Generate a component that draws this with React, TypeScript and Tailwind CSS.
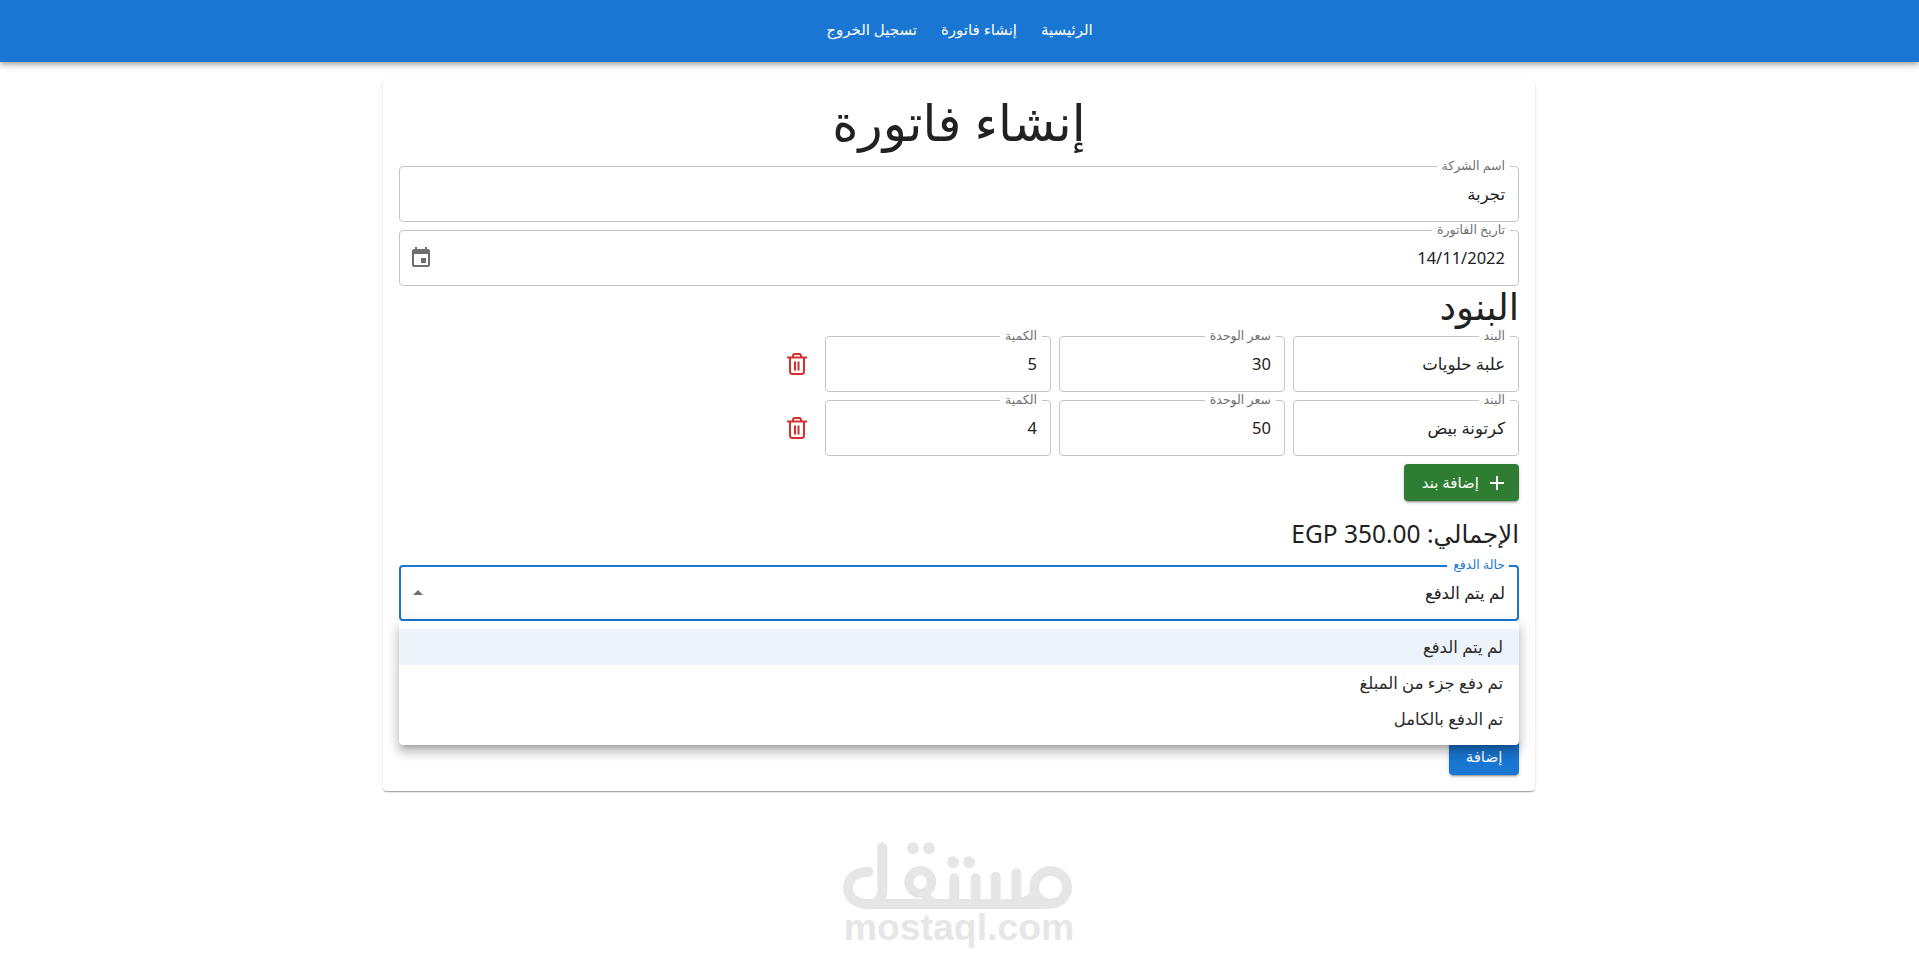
import React from "react";

const fieldFont = "font-['Noto_Sans','DejaVu_Sans',sans-serif]";

function Field({
  label,
  value,
  className,
  focused,
  end,
}: {
  label: string;
  value: string;
  className?: string;
  focused?: boolean;
  end?: React.ReactNode;
}) {
  return (
    <div className={`relative h-[56px] ${className ?? ""}`}>
      <fieldset
        className={`absolute inset-0 -top-[5px] rounded-[4px] px-2 ${
          focused ? "border-2 border-[#1976d2]" : "border border-[#c4c4c4]"
        }`}
      >
        <legend className="h-[11px] px-[5px] text-[12.500px] leading-[11px] invisible">{label}</legend>
      </fieldset>
      <label
        className={`absolute top-[-8px] right-[14px] text-[12.500px] leading-[16px] ${
          focused ? "text-[#1976d2]" : "text-[#6f6f6f]"
        }`}
      >
        {label}
      </label>
      <div className="relative flex h-full items-center justify-between px-[14px] text-[16.500px] text-[#212121]">
        <span>{value}</span>
        {end}
      </div>
    </div>
  );
}

function TrashIcon() {
  return (
    <svg width="24" height="24" viewBox="0 0 24 24" fill="none" stroke="#d32f2f" strokeWidth="2">
      <path d="M2 5.500h20" />
      <path d="M5 5.500v14a2.500 2.500 0 0 0 2.500 2.500h9a2.500 2.500 0 0 0 2.500-2.500v-14" />
      <path d="M8 5.500V4a2 2 0 0 1 2-2h4a2 2 0 0 1 2 2v1.500" />
      <path d="M10 9.500v9M13.500 9.500v9" />
    </svg>
  );
}

function ItemRow({ name, price, qty }: { name: string; price: string; qty: string }) {
  return (
    <div className="flex items-center gap-2">
      <Field label="البند" value={name} className="w-[226px]" />
      <Field label="سعر الوحدة" value={price} className="w-[226px]" />
      <Field label="الكمية" value={qty} className="w-[226px]" />
      <div className="mr-[2px] flex w-[36px] justify-center">
        <TrashIcon />
      </div>
    </div>
  );
}

function MostaqlLogo() {
  return (
    <svg width="240" height="70" viewBox="180 90 720 210" fill="none" stroke="#e6e6e6" strokeWidth="30" strokeLinecap="round">
      {/* meem */}
      <circle cx="815" cy="232" r="49" />
      {/* baseline */}
      <path d="M270 282H800" />
      {/* lam */}
      <path d="M268 185C225 185 207 210 207 234C207 262 232 283 270 283C300 283 310 262 310 240V112" />
      {/* qaf */}
      <circle cx="424" cy="216" r="34" strokeWidth="28" />
      <path d="M470 282C450 275 440 262 440 250" />
      {/* teeth */}
      <path d="M526 278V205M590 278V205M650 278V200M712 278V190" />
      <path d="M712 278C735 278 752 270 760 262" />
      {/* dots */}
      <g fill="#e6e6e6" stroke="none">
        <circle cx="402" cy="115" r="18" />
        <circle cx="450" cy="115" r="18" />
        <circle cx="522" cy="157" r="18" />
        <circle cx="570" cy="157" r="18" />
      </g>
    </svg>
  );
}

export default function App() {
  return (
    <div dir="rtl" className={`min-h-[967px] bg-white ${fieldFont}`}>
      <header className="flex h-[62px] items-center justify-center gap-6 bg-[#1976d2] pb-1 text-[15px] font-medium text-white shadow-[0_2px_4px_-1px_rgba(0,0,0,0.2),0_4px_5px_0_rgba(0,0,0,0.14),0_1px_10px_0_rgba(0,0,0,0.12)]">
        <span>الرئيسية</span>
        <span>إنشاء فاتورة</span>
        <span>تسجيل الخروج</span>
      </header>

      <div className="pr-px">
        <main className="relative mx-auto mt-[18px] h-[711px] w-[1152px] rounded-[4px] bg-white p-4 shadow-[0_2px_1px_-1px_rgba(0,0,0,0.2),0_1px_1px_0_rgba(0,0,0,0.14),0_1px_3px_0_rgba(0,0,0,0.12)]">
          <h1 className="h-[70px] text-center text-[50px] leading-[52px] text-[#212121]">إنشاء فاتورة</h1>
          <div className="flex flex-col gap-2">
            <Field label="اسم الشركة" value="تجربة" />
            <Field
              label="تاريخ الفاتورة"
              value="14/11/2022"
              end={
                <svg className="-ml-1" width="24" height="24" viewBox="0 0 24 24" fill="#6e6e6e">
                  <path d="M17 12h-5v5h5v-5zM16 1v2H8V1H6v2H5c-1.110 0-1.990.9-1.990 2L3 19c0 1.100.89 2 2 2h14c1.100 0 2-.9 2-2V5c0-1.100-.9-2-2-2h-1V1h-2zm3 18H5V8h14v11z" />
                </svg>
              }
            />
          </div>
          <h2 className="mt-[2px] h-[48px] text-[37px] leading-[36px] text-[#212121]">البنود</h2>
          <div className="flex flex-col gap-2">
            <ItemRow name="علبة حلويات" price="30" qty="5" />
            <ItemRow name="كرتونة بيض" price="50" qty="4" />
          </div>
          <div className="mt-2 flex">
            <button className="flex h-[37px] w-[115px] items-center gap-[6px] rounded-[4px] bg-[#2e7d32] pr-[10px] text-[15px] font-medium text-white shadow-[0_3px_1px_-2px_rgba(0,0,0,0.2),0_2px_2px_0_rgba(0,0,0,0.14),0_1px_5px_0_rgba(0,0,0,0.12)]">
              <svg width="24" height="24" viewBox="0 0 24 24" fill="#ffffff">
                <path d="M19 13h-6v6h-2v-6H5v-2h6V5h2v6h6v2z" />
              </svg>
              <span>إضافة بند</span>
            </button>
          </div>
          <p className="mt-[17px] h-[47px] text-[24.500px] leading-[32px] text-[#212121]">الإجمالي: EGP 350.00</p>
          <Field
            label="حالة الدفع"
            value="لم يتم الدفع"
            focused
            end={
              <svg className="-ml-[7px]" width="24" height="24" viewBox="0 0 24 24" fill="#6e6e6e">
                <path d="m7 14 5-5 5 5z" />
              </svg>
            }
          />
          <div className="mt-[8px] flex justify-start">
            <button className="mt-[109px] h-[37px] w-[70px] rounded-[4px] bg-[#1976d2] text-[15px] font-medium text-white shadow-[0_3px_1px_-2px_rgba(0,0,0,0.2),0_2px_2px_0_rgba(0,0,0,0.14),0_1px_5px_0_rgba(0,0,0,0.12)]">
              إضافة
            </button>
          </div>
          <ul className="absolute top-[541px] right-4 left-4 rounded-[4px] bg-white py-2 text-[16.500px] text-[#2b2b2b] shadow-[0_5px_5px_-3px_rgba(0,0,0,0.2),0_8px_10px_1px_rgba(0,0,0,0.14),0_3px_14px_2px_rgba(0,0,0,0.12)]">
            <li className="flex h-[36px] items-center bg-[#edf3fa] px-4">لم يتم الدفع</li>
            <li className="flex h-[36px] items-center px-4">تم دفع جزء من المبلغ</li>
            <li className="flex h-[36px] items-center px-4">تم الدفع بالكامل</li>
          </ul>
        </main>

        <footer className="mt-[49px] flex flex-col items-center">
          <MostaqlLogo />
          <div dir="ltr" className="-mt-[2px] text-[37.400px] font-bold leading-[38px] text-[#e6e6e6] font-['Liberation_Sans',sans-serif]">
            mostaql.com
          </div>
        </footer>
      </div>
    </div>
  );
}
